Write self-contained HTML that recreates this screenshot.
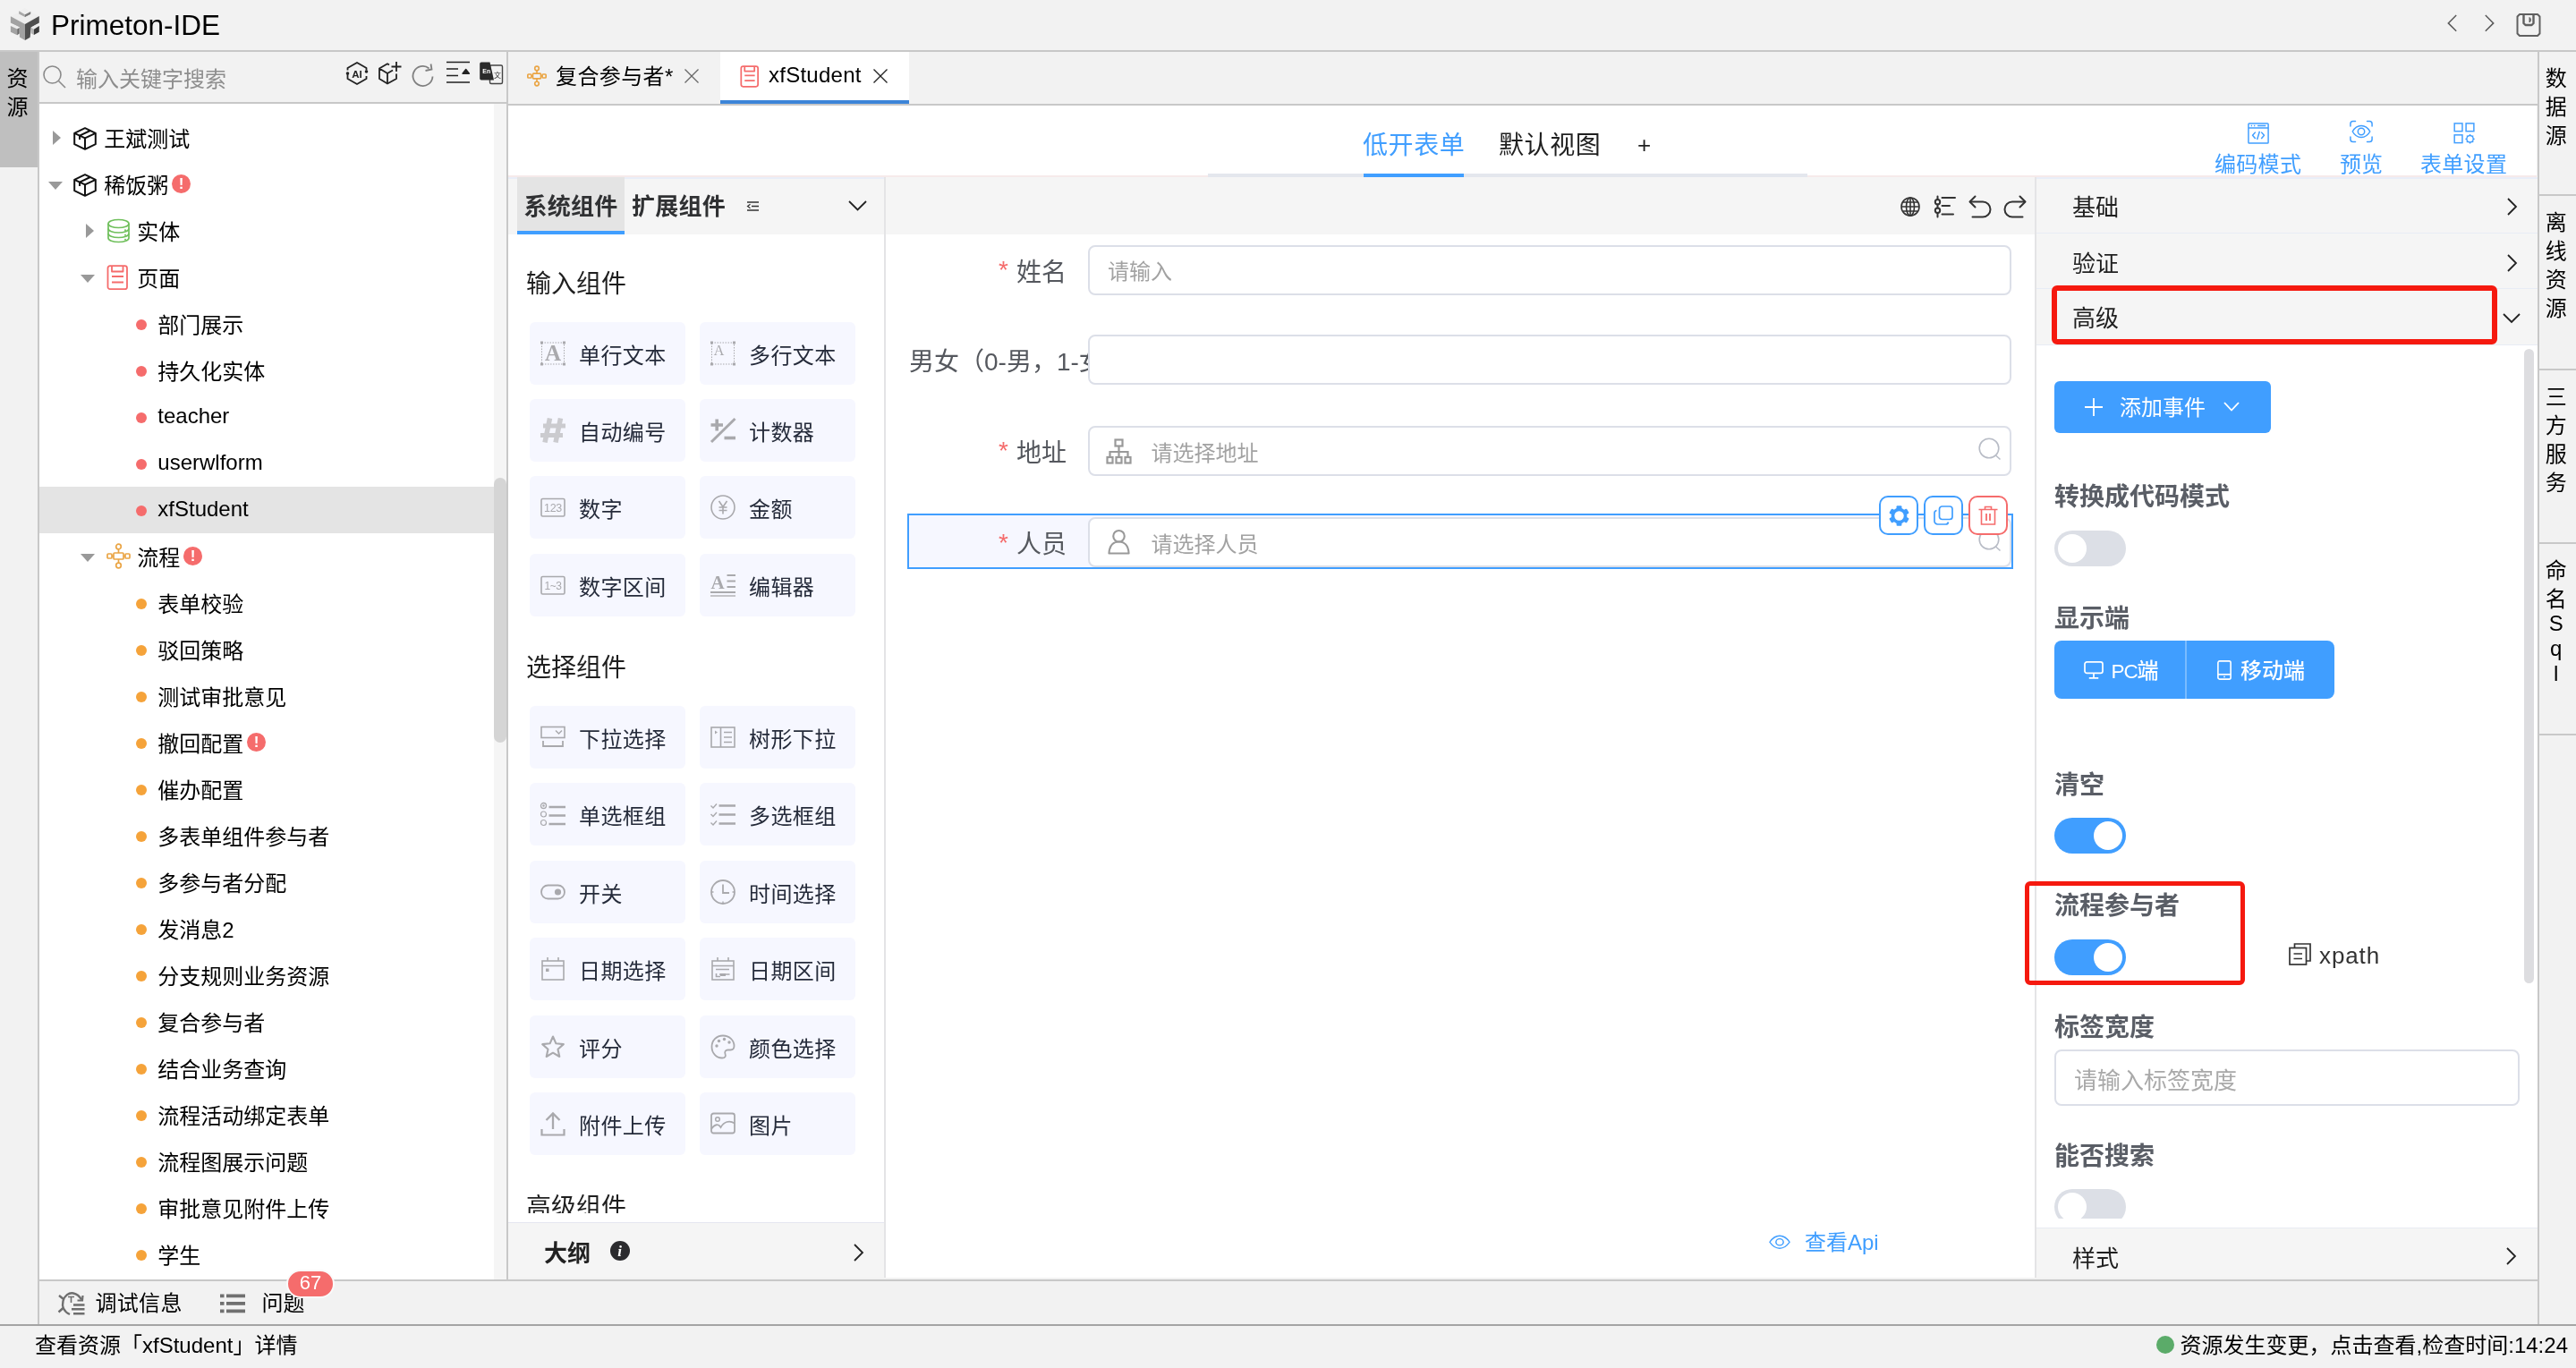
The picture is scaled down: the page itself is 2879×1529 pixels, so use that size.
<!DOCTYPE html>
<html lang="zh-CN">
<head>
<meta charset="utf-8">
<title>Primeton-IDE</title>
<style>
*{box-sizing:border-box;margin:0;padding:0}
html,body{width:2879px;height:1529px;overflow:hidden;background:#f2f2f2}
body{position:relative;font-family:"Liberation Sans","Noto Sans CJK SC",sans-serif;color:#000;font-size:24px;line-height:1}
.abs{position:absolute}
body>div{will-change:transform}
svg{display:block;overflow:visible}
/* title bar */
#titlebar{position:absolute;left:0;top:0;width:2879px;height:58px;background:#f2f2f2;border-bottom:2px solid #c8c8c8}
#title{position:absolute;left:57px;top:8px;font-size:31.5px;line-height:40px;color:#000;white-space:nowrap}
/* left side strip */
#lside{position:absolute;left:0;top:58px;width:44px;height:1423px;background:#f2f2f2;border-right:2px solid #c8c8c8}
#lside .tab{position:absolute;left:0;top:0;width:42px;height:129px;background:#bfbfbf;font-size:24px;line-height:32px;text-align:center;padding-top:13.500px;padding-right:3px}
/* search */
#search{position:absolute;left:44px;top:58px;width:522px;height:58px;background:#f2f2f2;border-bottom:2px solid #c8c8c8}
#search .ph{position:absolute;left:41px;top:10.500px;font-size:24px;line-height:40px;color:#8e8e8e;white-space:nowrap}
/* tree */
#tree{position:absolute;left:44px;top:116px;width:508px;height:1314px;background:#fff;overflow:hidden}
#treesb{position:absolute;left:552px;top:116px;width:14px;height:1314px;background:#f5f5f5}
#treesb i{position:absolute;left:0px;top:418px;width:13.500px;height:296px;border-radius:7px;background:#d5d5d5}
.row{position:absolute;left:0;width:508px;height:52px;white-space:nowrap}
.row.sel{background:#e4e4e4}
.row .t{position:absolute;top:1.5px;font-size:24px;line-height:52px;color:#000}
.row .t.lat{top:-1.3px}
.dot{position:absolute;top:21px;width:12px;height:12px;border-radius:50%}
.dot.r{background:#f56c6c}
.dot.o{background:#f5a33a}
.wn{display:inline-block;width:21px;height:21px;border-radius:50%;background:#f56c6c;color:#fff;font-size:17px;line-height:21px;text-align:center;font-weight:bold;margin-left:3.7px;vertical-align:4.5px}
.tri-r{position:absolute;width:0;height:0;border-left:9px solid #999;border-top:8px solid transparent;border-bottom:8px solid transparent}
.tri-d{position:absolute;width:0;height:0;border-top:9px solid #999;border-left:8px solid transparent;border-right:8px solid transparent}
#vline1{position:absolute;left:566px;top:58px;width:2px;height:1372px;background:#c8c8c8}
/* editor tabs */
#tabs{position:absolute;left:568px;top:58px;width:2268px;height:60px;background:#f2f2f2;border-bottom:2px solid #c8c8c8}
#tabs .tb{position:absolute;top:0;height:58px;font-size:24px;line-height:52px;white-space:nowrap}
#tabs .act{background:#fff;border-bottom:4px solid #3c85d8}
/* sub header */
#subhdr{position:absolute;left:568px;top:118px;width:2267px;height:80px;background:#fff;z-index:2;border-bottom:2px solid #f6eaea}
/* components */
#comp{position:absolute;left:568px;top:197px;width:420px;height:1231px;background:#fff;overflow:hidden}
/* comp panel */
.chdr{position:absolute;left:0;top:0;width:420px;height:65px;background:#f5f5f5;border-top:3px solid #e9eef8}
.ctab,.ctab2{position:absolute;top:-3px;height:65px;font-size:26px;font-weight:bold;line-height:69px;color:#303133;white-space:nowrap;letter-spacing:0.25px}
.ctab{left:10px;width:120px;background:#e4e4e4;border-bottom:4px solid #409eff;text-align:center}
.ctab2{left:138px}
.cbody{position:absolute;left:0;top:65px;width:420px;height:1094px;overflow:hidden}
.cbody>*{margin-top:-65px}
.ctitle{position:absolute;left:20px;font-size:28px;line-height:40px;color:#1f1f1f;white-space:nowrap}
.card{position:absolute;width:174px;height:70px;border-radius:6px;background:#f6f7ff;white-space:nowrap}
.card .ci{position:absolute;left:12px;top:21px}
.card span{position:absolute;left:55px;top:17.7px;font-size:24px;line-height:40px;color:#252b3a;letter-spacing:0.4px}
.outline{position:absolute;left:0;top:1169px;width:420px;height:62px;background:#f5f5f5;border-top:1px solid #e4e6f0}
.outline b{position:absolute;left:40px;top:14px;font-size:26px;line-height:40px;color:#222}
#vline2{position:absolute;left:988px;top:197px;width:2px;height:1231px;background:#e4e4e6}
#canvas{position:absolute;left:990px;top:197px;width:1285px;height:1231px;background:#fff;overflow:hidden}
/* canvas form */
.flabel{position:absolute;left:26px;width:200px;height:55px;font-size:28px;line-height:55px;color:#55585e;text-align:right;padding-right:24px;white-space:nowrap;overflow:hidden}
.flabel i{font-style:normal;color:#f56c6c;margin-right:9px;font-size:28px;font-family:"Liberation Sans",sans-serif;position:relative;top:-2.300px}
.finput{position:absolute;left:226px;width:1032px;height:55px;border:2px solid #dcdfe8;border-radius:8px;background:#fff}
.fph{position:absolute;top:6px;font-size:24px;line-height:40px;color:#a2a2a2;white-space:nowrap}
.abtn{position:absolute;width:44px;height:44px;border:2px solid #409eff;border-radius:10px;background:#fff}
#vline3{position:absolute;left:2274px;top:197px;width:2px;height:1231px;background:#e4e4e6}
#props{position:absolute;left:2276px;top:197px;width:560px;height:1231px;background:#fff;overflow:hidden}
/* props */
.prow{position:absolute;left:0;width:560px;background:#f5f5f5;border-bottom:1px solid #e8ecf5}
.prow span{position:absolute;left:40px;top:14px;font-size:26px;line-height:40px;color:#1f1f1f;white-space:nowrap}
.pbody{position:absolute;left:0;top:189px;width:560px;height:976px;overflow:hidden;background:#fff}
.pbtn{position:absolute;background:#409eff;border-radius:6px}
.plabel{position:absolute;left:20px;font-size:28px;font-weight:bold;line-height:40px;color:#5a5e66;white-space:nowrap}
.sw{position:absolute;left:20px;width:80px;height:40px;border-radius:20px}
.sw i{position:absolute;top:4px;width:32px;height:32px;border-radius:50%;background:#fff}
.sw.off{background:#dcdfe6}.sw.off i{left:4px}
.sw.on{background:#409eff}.sw.on i{left:44px}
/* right strip */
#rside{position:absolute;left:2836px;top:58px;width:43px;height:1423px;background:#f2f2f2;border-left:2px solid #c8c8c8}
#rside .tab{position:relative;width:41px;font-size:24px;line-height:32px;text-align:center;border-bottom:2px solid #c8c8c8;padding-top:14px;padding-right:3.600px}
/* bottom */
#bottombar{position:absolute;left:44px;top:1430px;width:2792px;height:51px;background:#f2f2f2;border-top:2px solid #c8c8c8}
#status{position:absolute;left:0;top:1480px;width:2879px;height:49px;background:#f2f2f2;border-top:2.500px solid #a4a4a4;font-size:24px}
</style>
</head>
<body>
<div id="titlebar">
  <svg class="abs" style="left:0;top:0" width="120" height="60" viewBox="0 0 2576 1288">
    <polygon points="455,262 600,195 735,280 600,350" fill="#efefef"/>
    <polygon points="455,262 600,350 600,412 455,340" fill="#a9a9a9"/>
    <polygon points="600,350 735,280 735,345 600,412" fill="#7a7a7a"/>
    <polygon points="255,390 440,305 455,340 600,412 735,345 760,300 940,385 600,582" fill="#eeeeee"/>
    <polygon points="255,390 600,582 600,968 470,893 470,655 255,545" fill="#a2a2a2"/>
    <polygon points="600,582 940,385 940,545 745,655 722,895 600,968" fill="#4f4f4f"/>
    <polygon points="255,622 330,588 465,655 412,700" fill="#ececec"/>
    <polygon points="255,622 412,700 412,845 255,770" fill="#a2a2a2"/>
    <polygon points="412,700 465,665 465,805 412,845" fill="#6a6a6a"/>
    <polygon points="745,660 870,590 940,622 815,702" fill="#ececec"/>
    <polygon points="745,660 815,702 815,838 745,800" fill="#b4b4b4"/>
    <polygon points="815,702 940,622 940,770 815,838" fill="#3a3a3a"/>
  </svg>
  <div id="title">Primeton-IDE</div>
  <svg class="abs" style="left:2734px;top:16px" width="14" height="20" viewBox="0 0 14 20" fill="none" stroke="#5a5a5a" stroke-width="1.500"><path d="M11.200 1 L2.300 9.900 L11.200 18.800"/></svg>
  <svg class="abs" style="left:2775px;top:16px" width="14" height="20" viewBox="0 0 14 20" fill="none" stroke="#5a5a5a" stroke-width="1.500"><path d="M2.800 1 L11.700 9.900 L2.800 18.800"/></svg>
  <svg class="abs" style="left:2812px;top:14px" width="28" height="28" viewBox="0 0 28 28" fill="none" stroke="#606060" stroke-width="2" stroke-linejoin="round"><path d="M4 2 H24 L26.500 4.500 V23.500 L24 26 H4 L1.500 23.500 V4.500 Z"/><path d="M8.500 2 V12 L10.500 14 H17.500 L19.500 12 V2" stroke-width="2.400"/><path d="M15 5.500 V11 C16.800 10 16.800 6.500 15 5.500 Z" stroke-width="1" fill="#606060"/></svg>
</div>
<div id="lside"><div class="tab">资<br>源</div></div>
<div id="search">
  <svg class="abs" style="left:3px;top:14px" width="28" height="28" viewBox="0 0 28 28" fill="none" stroke="#8a8a8a" stroke-width="1.600"><circle cx="11.500" cy="11.500" r="9.500"/><path d="M18.500 18.500 L26 26"/></svg>
  <div class="ph">输入关键字搜索</div>
  <svg class="abs" style="left:341px;top:10px" width="28" height="28" viewBox="0 0 28 28" fill="none" stroke="#222" stroke-width="1.800" stroke-linejoin="round"><path d="M3.500 10.500 V8 L14 2 L24.500 8 V10.500 M24.500 17 V20 L14 26 L3.500 20 V15"/><circle cx="3.500" cy="14" r="1.800" fill="#222" stroke="none"/><circle cx="24.500" cy="12" r="1.800" fill="#222" stroke="none"/><text x="14" y="18.500" font-family="Liberation Sans,sans-serif" font-size="11.500" font-weight="bold" fill="#222" stroke="none" text-anchor="middle">AI</text></svg>
  <svg class="abs" style="left:378px;top:10px" width="28" height="28" viewBox="0 0 28 28" fill="none" stroke="#222" stroke-width="1.800" stroke-linejoin="round"><path d="M13 4.500 L11 3.300 L2 8.500 V20 L11 25.500 L21 20 V14.500 M2 8.500 L11 14 L17 10.500 M11 14 V25.500"/><path d="M15.500 6.500 H26.500 M21 1 V12"/></svg>
  <svg class="abs" style="left:415px;top:13px" width="28" height="28" viewBox="0 0 28 28" fill="none" stroke="#808080" stroke-width="1.800"><path d="M24.500 14.500 A11 11 0 1 1 20.500 5.500"/><path d="M16.500 8 L23.500 6.500 L22.500 0.500"/></svg>
  <svg class="abs" style="left:454px;top:10px" width="28" height="28" viewBox="0 0 28 28" fill="none" stroke="#222" stroke-width="1.800"><path d="M1 1.500 H27 M1 9 H14 M1 16.500 H14 M1 24 H27" stroke-width="1.600"/><path d="M19 14.300 L22.700 9.500 L26.400 14.300 Z" fill="#222" stroke-linejoin="round" stroke-width="1.400"/></svg>
  <svg class="abs" style="left:491px;top:10px" width="28" height="28" viewBox="0 0 28 28"><rect x="12.500" y="5" width="14" height="20.500" rx="1.500" fill="#f2f2f2" stroke="#444" stroke-width="1.400"/><text x="21" y="18.500" font-family="Liberation Sans,Noto Sans CJK SC,sans-serif" font-size="8" fill="#333" text-anchor="middle">文</text><path d="M3 1.500 H12.500 L17 21.500 H3 A1.800 1.800 0 0 1 1.200 19.700 V3.300 A1.800 1.800 0 0 1 3 1.500 Z" fill="#2b2b2b"/><text x="8.700" y="14" font-family="Liberation Sans,sans-serif" font-size="7" font-weight="bold" fill="#fff" text-anchor="middle">En</text></svg>
</div>
<div id="tree">
<div class="row" style="top:12px"><i class="tri-r" style="left:15px;top:18px"></i><svg class="abs" style="left:38px;top:14px" width="26" height="26" viewBox="0 0 26 26" fill="none" stroke="#111" stroke-width="2" stroke-linejoin="round"><path d="M13 1.200 L24.800 6.800 V19.200 L13 24.800 L1.200 19.200 V6.800 Z"/><path d="M1.200 6.800 L13 12.400 L24.800 6.800 M13 12.400 V24.800 M18.800 4 L7 9.600 V14"/></svg><span class="t" style="left:72.3px">王斌测试</span></div>
<div class="row" style="top:64px"><i class="tri-d" style="left:10px;top:23px"></i><svg class="abs" style="left:38px;top:14px" width="26" height="26" viewBox="0 0 26 26" fill="none" stroke="#111" stroke-width="2" stroke-linejoin="round"><path d="M13 1.200 L24.800 6.800 V19.200 L13 24.800 L1.200 19.200 V6.800 Z"/><path d="M1.200 6.800 L13 12.400 L24.800 6.800 M13 12.400 V24.800 M18.800 4 L7 9.600 V14"/></svg><span class="t" style="left:72.3px">稀饭粥<b class="wn">!</b></span></div>
<div class="row" style="top:116px"><i class="tri-r" style="left:52px;top:18px"></i><svg class="abs" style="left:75px;top:12px" width="27" height="28" viewBox="0 0 27 28" fill="none" stroke="#6fbf5b" stroke-width="1.700"><ellipse cx="13.500" cy="6" rx="11.500" ry="4.500"/><path d="M2 6 V22 C2 24.500 7 26.500 13.500 26.500 S25 24.500 25 22 V6"/><path d="M2 11.500 C2 14 7 16 13.500 16 S25 14 25 11.500 M2 17 C2 19.500 7 21.500 13.500 21.500 S25 19.500 25 17"/><circle cx="21" cy="13.200" r="1" fill="#6fbf5b" stroke="none"/><circle cx="21" cy="18.700" r="1" fill="#6fbf5b" stroke="none"/><circle cx="21" cy="23.700" r="1" fill="#6fbf5b" stroke="none"/></svg><span class="t" style="left:109.3px">实体</span></div>
<div class="row" style="top:168px"><i class="tri-d" style="left:45.8px;top:23px"></i><svg class="abs" style="left:75px;top:11.500px" width="24" height="28" viewBox="0 0 24 28" fill="none" stroke="#f56c6c" stroke-width="1.800" stroke-linejoin="round"><rect x="1.500" y="1.200" width="21.500" height="26" rx="2.500"/><path d="M6 1.200 V7.500 H18.500 V1.200 M6 13 H19 M6 19.500 H19"/></svg><span class="t" style="left:109.3px">页面</span></div>
<div class="row" style="top:220px"><i class="dot r" style="left:108px"></i><span class="t" style="left:132.3px">部门展示</span></div>
<div class="row" style="top:272px"><i class="dot r" style="left:108px"></i><span class="t" style="left:132.3px">持久化实体</span></div>
<div class="row" style="top:324px"><i class="dot r" style="left:108px"></i><span class="t lat" style="left:132.3px">teacher</span></div>
<div class="row" style="top:376px"><i class="dot r" style="left:108px"></i><span class="t lat" style="left:132.3px">userwlform</span></div>
<div class="row sel" style="top:428px"><i class="dot r" style="left:108px"></i><span class="t lat" style="left:132.3px">xfStudent</span></div>
<div class="row" style="top:480px"><i class="tri-d" style="left:45.8px;top:23px"></i><svg class="abs" style="left:75px;top:11px" width="27" height="29" viewBox="0 0 27 29" fill="none" stroke="#eaa545" stroke-width="1.700"><circle cx="13.5" cy="4" r="2.8"/><circle cx="13.5" cy="25" r="2.8"/><rect x="8" y="11" width="11" height="7" rx="1"/><path d="M13.5 7 V11 M13.5 18 V22"/><rect x="1" y="12" width="5" height="5" rx="1"/><rect x="21" y="12" width="5" height="5" rx="1"/><path d="M6 14.5 H8 M19 14.5 H21"/></svg><span class="t" style="left:109.3px">流程<b class="wn">!</b></span></div>
<div class="row" style="top:532px"><i class="dot o" style="left:108px"></i><span class="t" style="left:132.3px">表单校验</span></div>
<div class="row" style="top:584px"><i class="dot o" style="left:108px"></i><span class="t" style="left:132.3px">驳回策略</span></div>
<div class="row" style="top:636px"><i class="dot o" style="left:108px"></i><span class="t" style="left:132.3px">测试审批意见</span></div>
<div class="row" style="top:688px"><i class="dot o" style="left:108px"></i><span class="t" style="left:132.3px">撤回配置<b class="wn">!</b></span></div>
<div class="row" style="top:740px"><i class="dot o" style="left:108px"></i><span class="t" style="left:132.3px">催办配置</span></div>
<div class="row" style="top:792px"><i class="dot o" style="left:108px"></i><span class="t" style="left:132.3px">多表单组件参与者</span></div>
<div class="row" style="top:844px"><i class="dot o" style="left:108px"></i><span class="t" style="left:132.3px">多参与者分配</span></div>
<div class="row" style="top:896px"><i class="dot o" style="left:108px"></i><span class="t" style="left:132.3px">发消息2</span></div>
<div class="row" style="top:948px"><i class="dot o" style="left:108px"></i><span class="t" style="left:132.3px">分支规则业务资源</span></div>
<div class="row" style="top:1000px"><i class="dot o" style="left:108px"></i><span class="t" style="left:132.3px">复合参与者</span></div>
<div class="row" style="top:1052px"><i class="dot o" style="left:108px"></i><span class="t" style="left:132.3px">结合业务查询</span></div>
<div class="row" style="top:1104px"><i class="dot o" style="left:108px"></i><span class="t" style="left:132.3px">流程活动绑定表单</span></div>
<div class="row" style="top:1156px"><i class="dot o" style="left:108px"></i><span class="t" style="left:132.3px">流程图展示问题</span></div>
<div class="row" style="top:1208px"><i class="dot o" style="left:108px"></i><span class="t" style="left:132.3px">审批意见附件上传</span></div>
<div class="row" style="top:1260px"><i class="dot o" style="left:108px"></i><span class="t" style="left:132.3px">学生</span></div>
<div class="row" style="top:1312px"><i class="dot o" style="left:108px"></i><span class="t" style="left:132.3px"></span></div>

</div>
<div id="treesb"><i></i></div>
<div id="vline1"></div>
<div id="tabs">
<div class="tb" style="left:0;width:237px">
  <svg class="abs" style="left:21px;top:15px" width="22" height="24" viewBox="0 0 27 29" fill="none" stroke="#eaa545" stroke-width="2"><circle cx="13.500" cy="4" r="2.800"/><circle cx="13.500" cy="25" r="2.800"/><rect x="8" y="11" width="11" height="7" rx="1"/><path d="M13.500 7 V11 M13.500 18 V22"/><rect x="1" y="12" width="5" height="5" rx="1"/><rect x="21" y="12" width="5" height="5" rx="1"/><path d="M6 14.500 H8 M19 14.500 H21"/></svg>
  <span class="abs" style="left:53px;top:2px;letter-spacing:0.400px">复合参与者*</span>
  <svg class="abs" style="left:197px;top:19px" width="16" height="16" viewBox="0 0 16 16" fill="none" stroke="#666" stroke-width="1.300"><path d="M0.500 0.500 L15.500 15.500 M15.500 0.500 L0.500 15.500"/></svg>
</div>
<div class="tb act" style="left:237px;width:211px">
  <svg class="abs" style="left:21.500px;top:14.500px" width="21" height="24.500" viewBox="0 0 24 28" fill="none" stroke="#f56c6c" stroke-width="2" stroke-linejoin="round"><rect x="1.500" y="1.200" width="21.500" height="26" rx="2.500"/><path d="M6 1.200 V7.500 H18.500 V1.200 M6 13 H19 M6 19.500 H19"/></svg>
  <span class="abs" style="left:54px;top:0px;letter-spacing:0.250px">xfStudent</span>
  <svg class="abs" style="top:19px;left:171px" width="16" height="16" viewBox="0 0 16 16" fill="none" stroke="#222" stroke-width="1.400"><path d="M0.500 0.500 L15.500 15.500 M15.500 0.500 L0.500 15.500"/></svg>
</div>

</div>
<div id="subhdr">
<div class="abs" style="left:782px;top:76px;width:670px;height:4px;background:#e4e7ed"></div>
<div class="abs" style="left:956px;top:76px;width:112px;height:4px;background:#409eff"></div>
<div class="abs" style="left:955px;top:24.500px;font-size:28px;line-height:40px;color:#409eff;white-space:nowrap;letter-spacing:0.600px">低开表单</div>
<div class="abs" style="left:1107px;top:24.500px;font-size:28px;line-height:40px;color:#1f1f1f;white-space:nowrap;letter-spacing:0.600px">默认视图</div>
<div class="abs" style="left:1262px;top:24px;font-size:26px;line-height:40px;color:#1f1f1f">+</div>
<!-- right actions -->
<svg class="abs" style="left:1944px;top:18.500px" width="24" height="24" viewBox="0 0 26 26" fill="none" stroke="#409eff" stroke-width="1.600" stroke-linejoin="round"><rect x="1" y="1" width="24" height="24" rx="1"/><path d="M1 6.500 H25 M4 3.800 H5.500 M7.500 3.800 H9 M12 3.800 H22"/><path d="M9.500 11.500 L6 15.500 L9.500 19.500 M16.500 11.500 L20 15.500 L16.500 19.500 M14.500 10.500 L11.500 20.500"/></svg>
<div class="abs" style="left:1907px;top:50px;font-size:24px;line-height:32px;color:#409eff;white-space:nowrap;letter-spacing:0.300px">编码模式</div>
<svg class="abs" style="left:2058px;top:16px" width="26" height="26" viewBox="0 0 28 27" fill="none" stroke="#409eff" stroke-width="1.600" stroke-linecap="round"><path d="M1 7 V4 A3 3 0 0 1 4 1 H7 M21 1 H24 A3 3 0 0 1 27 4 V7 M27 20 V23 A3 3 0 0 1 24 26 H21 M7 26 H4 A3 3 0 0 1 1 23 V20"/><path d="M3.500 13.500 C6.500 8 10.500 6.500 14 6.500 S21.500 8 24.500 13.500 C21.500 19 17.500 20.500 14 20.500 S6.500 19 3.500 13.500 Z"/><circle cx="14" cy="13.500" r="4"/></svg>
<div class="abs" style="left:2047px;top:50px;font-size:24px;line-height:32px;color:#409eff;white-space:nowrap">预览</div>
<svg class="abs" style="left:2174px;top:18.500px" width="24.500" height="24" viewBox="0 0 26 26" fill="none" stroke="#409eff" stroke-width="1.600"><rect x="1" y="1" width="9.500" height="9.500"/><rect x="15" y="1" width="9.500" height="9.500"/><rect x="1" y="15" width="9.500" height="9.500"/><circle cx="19.800" cy="19.800" r="4"/><path d="M19.800 14.200 V15.800 M19.800 23.800 V25.400 M14.200 19.800 H15.800 M23.800 19.800 H25.400 M15.800 15.800 L17 17 M22.600 22.600 L23.800 23.800 M15.800 23.800 L17 22.600 M22.600 17 L23.800 15.800" stroke-width="1.400"/></svg>
<div class="abs" style="left:2137px;top:50px;font-size:24px;line-height:32px;color:#409eff;white-space:nowrap;letter-spacing:0.300px">表单设置</div>

</div>
<div id="comp">
<div class="chdr"><div class="ctab on">系统组件</div><div class="ctab2">扩展组件</div><svg class="abs" style="left:266.500px;top:25px" width="13" height="11" viewBox="0 0 13 11" fill="none" stroke="#333" stroke-width="1.600"><path d="M0 1 H13 M5 5.500 H13 M0 10 H13"/><path d="M3.500 3.200 L0.500 5.500 L3.500 7.800" stroke-width="1.200"/></svg><svg class="abs" style="left:380px;top:24.200px" width="21" height="12" viewBox="0 0 21 12" fill="none" stroke="#222" stroke-width="1.800"><path d="M1 1 L10.500 10.500 L20 1"/></svg></div>
<div class="cbody">
<div class="ctitle" style="top:101.3px">输入组件</div>
<div class="card" style="left:24px;top:163px"><svg class="ci" width="28" height="28" viewBox="0 0 28 28" fill="none" stroke="#a9a9ad" stroke-width="1.8" ><rect x="1.5" y="2" width="25" height="24" stroke-width="1" stroke-dasharray="1.5 1.5"/><rect x="0" y="0.5" width="3" height="3" fill="#a9a9ad" stroke="none"/><rect x="0" y="24.5" width="3" height="3" fill="#a9a9ad" stroke="none"/><rect x="25" y="0.5" width="3" height="3" fill="#a9a9ad" stroke="none"/><rect x="25" y="24.5" width="3" height="3" fill="#a9a9ad" stroke="none"/><text x="14" y="22" font-family="Liberation Serif,serif" font-weight="bold" font-size="25" fill="#a9a9ad" stroke="none" text-anchor="middle">A</text></svg><span>单行文本</span></div>
<div class="card" style="left:214px;top:163px"><svg class="ci" width="28" height="28" viewBox="0 0 28 28" fill="none" stroke="#a9a9ad" stroke-width="1.8" ><rect x="1.5" y="2" width="25" height="24" stroke-width="1" stroke-dasharray="1.5 1.5"/><rect x="0" y="0.5" width="3" height="3" fill="#a9a9ad" stroke="none"/><rect x="0" y="24.5" width="3" height="3" fill="#a9a9ad" stroke="none"/><rect x="25" y="0.5" width="3" height="3" fill="#a9a9ad" stroke="none"/><rect x="25" y="24.5" width="3" height="3" fill="#a9a9ad" stroke="none"/><text x="9.500" y="16" font-family="Liberation Serif,serif" font-size="16" fill="#a9a9ad" stroke="none" text-anchor="middle">A</text></svg><span>多行文本</span></div>
<div class="card" style="left:24px;top:249px"><svg class="ci" width="28" height="28" viewBox="0 0 28 28" fill="none" stroke="#a9a9ad" stroke-width="1.8" ><path d="M10.500 0.500 L5 27.500 M22.500 0.500 L17 27.500" stroke="#cbcbcf" stroke-width="5.500"/><path d="M3 9 H28 M0 19.500 H25" stroke="#cbcbcf" stroke-width="5"/></svg><span>自动编号</span></div>
<div class="card" style="left:214px;top:249px"><svg class="ci" width="28" height="28" viewBox="0 0 28 28" fill="none" stroke="#a9a9ad" stroke-width="1.8" ><path d="M0.500 8 H14 M7.200 1.500 V14.500" stroke-width="3.600"/><path d="M15.500 22.500 H28" stroke-width="3.600"/><path d="M27.500 1 L1 27" stroke-width="3"/></svg><span>计数器</span></div>
<div class="card" style="left:24px;top:335px"><svg class="ci" width="28" height="28" viewBox="0 0 28 28" fill="none" stroke="#a9a9ad" stroke-width="1.8" ><rect x="1" y="4.500" width="26" height="19.500" rx="1.500" stroke-width="1.600"/><text x="14" y="19" font-family="Liberation Sans,sans-serif" font-size="12.500" fill="#a9a9ad" stroke="none" text-anchor="middle" letter-spacing="-0.300">123</text></svg><span>数字</span></div>
<div class="card" style="left:214px;top:335px"><svg class="ci" width="28" height="28" viewBox="0 0 28 28" fill="none" stroke="#a9a9ad" stroke-width="1.8" ><circle cx="14" cy="14" r="13" stroke-width="1.600"/><path d="M9.500 7 L14 13.500 L18.500 7 M14 13.500 V21.500 M9.500 14 H18.500 M9.500 17.500 H18.500" stroke-width="1.600"/></svg><span>金额</span></div>
<div class="card" style="left:24px;top:422px"><svg class="ci" width="28" height="28" viewBox="0 0 28 28" fill="none" stroke="#a9a9ad" stroke-width="1.8" ><rect x="1" y="4.500" width="26" height="19.500" rx="1.500" stroke-width="1.600"/><text x="14" y="18.500" font-family="Liberation Sans,sans-serif" font-size="12" fill="#a9a9ad" stroke="none" text-anchor="middle" letter-spacing="-0.500">1~3</text></svg><span>数字区间</span></div>
<div class="card" style="left:214px;top:422px"><svg class="ci" width="28" height="28" viewBox="0 0 28 28" fill="none" stroke="#a9a9ad" stroke-width="1.8" ><text x="8" y="17.500" font-family="Liberation Serif,serif" font-weight="bold" font-size="21" fill="#a9a9ad" stroke="none" text-anchor="middle">A</text><path d="M18.500 3 H28 M18.500 9.500 H28 M18.500 16 H28" stroke-width="2"/><path d="M0 22 H28" stroke-width="2"/><path d="M0 26 H28" stroke-width="2" stroke="#c4c4c8"/></svg><span>编辑器</span></div>
<div class="ctitle" style="top:529.8px">选择组件</div>
<div class="card" style="left:24px;top:592px"><svg class="ci" width="28" height="28" viewBox="0 0 28 28" fill="none" stroke="#a9a9ad" stroke-width="1.8" ><rect x="1" y="2.500" width="26" height="12"  stroke-width="1.600"/><path d="M17 6.500 L20.500 10 L24 6.500" stroke-width="1.500"/><path d="M3 18 V24 H25 V18" stroke-width="1.800"/></svg><span>下拉选择</span></div>
<div class="card" style="left:214px;top:592px"><svg class="ci" width="28" height="28" viewBox="0 0 28 28" fill="none" stroke="#a9a9ad" stroke-width="1.8" ><rect x="1" y="3" width="26" height="22" stroke-width="1.600"/><path d="M11.500 3 V25" stroke-width="1.600"/><path d="M5 6.500 L8 8.500 L5 10.500 Z" fill="#a9a9ad" stroke="none"/><path d="M15 8.500 H24 M15 14 H24 M15 19.500 H24" stroke-width="1.600"/></svg><span>树形下拉</span></div>
<div class="card" style="left:24px;top:678px"><svg class="ci" width="28" height="28" viewBox="0 0 28 28" fill="none" stroke="#a9a9ad" stroke-width="1.8" ><circle cx="3.500" cy="4.500" r="3" stroke-width="1.300"/><circle cx="3.500" cy="4.500" r="1.200" fill="#a9a9ad" stroke="none"/><circle cx="3.500" cy="14" r="3" stroke-width="1.200"/><circle cx="3.500" cy="23.500" r="3" stroke-width="1.200"/><path d="M9.500 6 H28 M9.500 15.500 H28 M9.500 25 H28" stroke-width="2.300"/></svg><span>单选框组</span></div>
<div class="card" style="left:214px;top:678px"><svg class="ci" width="28" height="28" viewBox="0 0 28 28" fill="none" stroke="#a9a9ad" stroke-width="1.8" ><path d="M0.500 4.500 L3 7 L7 2.500 M0.500 14 L3 16.500 L7 12 M0.500 23.500 L3 26 L7 21.500" stroke-width="1.400"/><path d="M9.500 4.500 H28 M9.500 14.500 H28 M9.500 24.500 H28" stroke-width="2.300"/></svg><span>多选框组</span></div>
<div class="card" style="left:24px;top:765px"><svg class="ci" width="28" height="28" viewBox="0 0 28 28" fill="none" stroke="#a9a9ad" stroke-width="1.8" ><rect x="1" y="6.500" width="26" height="15" rx="7.500" stroke-width="1.800"/><circle cx="19.500" cy="14" r="3.600" fill="#a9a9ad" stroke="none"/></svg><span>开关</span></div>
<div class="card" style="left:214px;top:765px"><svg class="ci" width="28" height="28" viewBox="0 0 28 28" fill="none" stroke="#a9a9ad" stroke-width="1.8" ><circle cx="14" cy="14" r="13" stroke-width="1.800"/><path d="M14 5.500 V15 H21" stroke-width="1.800"/><path d="M14 24.500 V27 M1 14 H3.500 M24.500 14 H27" stroke-width="1.400"/></svg><span>时间选择</span></div>
<div class="card" style="left:24px;top:851px"><svg class="ci" width="28" height="28" viewBox="0 0 28 28" fill="none" stroke="#a9a9ad" stroke-width="1.8" ><rect x="2" y="5" width="24" height="21" stroke-width="1.600"/><path d="M2 10.500 H26 M8 1 V5 M20 1 V5" stroke-width="1.600"/><rect x="6" y="13.500" width="3.500" height="3.500" fill="#a9a9ad" stroke="none"/></svg><span>日期选择</span></div>
<div class="card" style="left:214px;top:851px"><svg class="ci" width="28" height="28" viewBox="0 0 28 28" fill="none" stroke="#a9a9ad" stroke-width="1.8" ><rect x="2" y="5" width="24" height="21" stroke-width="1.600"/><path d="M2 10.500 H26 M8 1 V5 M20 1 V5" stroke-width="1.600"/><path d="M6 14.500 H21 M10 20 H21.500 M6.500 19 V22.500 H11" stroke-width="1.600"/><rect x="11" y="19" width="6" height="3" fill="#a9a9ad" stroke="none"/></svg><span>日期区间</span></div>
<div class="card" style="left:24px;top:938px"><svg class="ci" width="28" height="28" viewBox="0 0 28 28" fill="none" stroke="#a9a9ad" stroke-width="1.8" ><path d="M14 2.500 L17.400 10.300 L25.800 11.100 L19.500 16.700 L21.300 25 L14 20.700 L6.700 25 L8.500 16.700 L2.200 11.100 L10.600 10.300 Z" stroke-width="2.100" stroke-linejoin="round"/></svg><span>评分</span></div>
<div class="card" style="left:214px;top:938px"><svg class="ci" width="28" height="28" viewBox="0 0 28 28" fill="none" stroke="#a9a9ad" stroke-width="1.8" ><path d="M14 1.500 C6.500 1.500 1.500 7 1.500 14 C1.500 21 6.500 26.500 13 26.500 C16.500 26.500 17.500 24.500 16.500 22 C15.500 19.500 17 17.500 19.500 17.500 H22.500 C25 17.500 26.500 15.500 26.500 13 C26.500 6.500 21 1.500 14 1.500 Z" stroke-width="1.800"/><circle cx="7" cy="13" r="1.700" fill="#a9a9ad" stroke="none"/><circle cx="9.500" cy="7.500" r="1.700" fill="#a9a9ad" stroke="none"/><circle cx="15.500" cy="5.500" r="1.700" fill="#a9a9ad" stroke="none"/><circle cx="21" cy="9" r="1.700" fill="#a9a9ad" stroke="none"/></svg><span>颜色选择</span></div>
<div class="card" style="left:24px;top:1024px"><svg class="ci" width="28" height="28" viewBox="0 0 28 28" fill="none" stroke="#a9a9ad" stroke-width="1.8" ><path d="M14 20 V2.500 M6.500 10 L14 2.500 L21.500 10" stroke-width="2.300"/><path d="M1.500 20 V26.500 H26.500 V20" stroke-width="2.200"/></svg><span>附件上传</span></div>
<div class="card" style="left:214px;top:1024px"><svg class="ci" width="28" height="28" viewBox="0 0 28 28" fill="none" stroke="#a9a9ad" stroke-width="1.8" ><rect x="1" y="2.500" width="26" height="22" rx="2.500" stroke-width="1.800"/><circle cx="8" cy="9" r="2.300" stroke-width="1.500"/><path d="M1 20 C5 14 9 14 11.500 18 C15 12 21 9.500 27 13.500" stroke-width="1.800"/></svg><span>图片</span></div>
<div class="ctitle" style="top:1133px">高级组件</div>
</div>
<div class="outline"><b>大纲</b><svg class="abs" style="left:114px;top:20.400px" width="22" height="22" viewBox="0 0 22 22"><circle cx="11" cy="11" r="11" fill="#2b2b2e"/><text x="10.500" y="17" font-family="Liberation Serif,serif" font-style="italic" font-weight="bold" font-size="17" fill="#fff" text-anchor="middle">i</text></svg><svg class="abs" style="left:386px;top:23px" width="11" height="20" viewBox="0 0 11 20" fill="none" stroke="#222" stroke-width="1.800"><path d="M1 1 L10 10 L1 19"/></svg></div>

</div>
<div id="vline2"></div>
<div id="canvas">
<div class="abs" style="left:0;top:1px;width:1285px;height:64px;background:#f5f5f5"></div>
<!-- toolbar icons -->
<svg class="abs" style="left:1134px;top:23px" width="22" height="22" viewBox="0 0 22 22" fill="none" stroke="#333" stroke-width="1.600"><circle cx="11" cy="11" r="10"/><ellipse cx="11" cy="11" rx="4.500" ry="10"/><path d="M11 1 V21 M1 11 H21 M2.500 6 H19.500 M2.500 16 H19.500"/></svg>
<svg class="abs" style="left:1171px;top:21px" width="26" height="26" viewBox="0 0 26 26" fill="none" stroke="#333" stroke-width="2" stroke-linecap="round"><path d="M4.500 1.500 V5 M4.500 10.500 V14.500 M4.500 20 V24.500"/><circle cx="4.500" cy="7.800" r="2.700"/><circle cx="4.500" cy="17.300" r="2.700"/><path d="M9.500 3 H24 M9.500 12 H18 M9.500 21.500 H22"/></svg>
<svg class="abs" style="left:1210px;top:21px" width="26" height="26" viewBox="0 0 26 26" fill="none" stroke="#333" stroke-width="2" stroke-linecap="round" stroke-linejoin="round"><path d="M7.500 1.500 L1.500 7.500 L7.500 13.500"/><path d="M2 7.500 H16 A8.500 8.500 0 0 1 16 24.500 H4.500"/></svg>
<svg class="abs" style="left:1249px;top:21px" width="26" height="26" viewBox="0 0 26 26" fill="none" stroke="#333" stroke-width="2" stroke-linecap="round" stroke-linejoin="round"><path d="M18.500 1.500 L24.500 7.500 L18.500 13.500"/><path d="M24 7.500 H10 A8.500 8.500 0 0 0 10 24.500 H21.500"/></svg>
<!-- form rows -->
<div class="flabel" style="top:79.700px"><i>*</i>姓名</div>
<div class="finput" style="top:77px;height:55.500px"><span class="fph" style="left:20px;top:8px">请输入</span></div>
<div class="flabel nowrapclip" style="top:180px;left:26px;width:200.400px;text-align:left;padding:0">男女（0-男，1-女）</div>
<div class="finput" style="top:177px;height:55.500px"></div>
<div class="flabel" style="top:281.600px"><i>*</i>地址</div>
<div class="finput" style="top:279px;height:56px">
  <svg class="abs" style="left:18px;top:12px" width="29" height="29" viewBox="0 0 29 29" fill="none" stroke="#999" stroke-width="2.200"><rect x="10.500" y="1.500" width="8" height="7"/><rect x="1.500" y="21" width="6" height="6.500"/><rect x="11.500" y="21" width="6" height="6.500"/><rect x="21.500" y="21" width="6" height="6.500"/><path d="M14.500 8.500 V21 M4.500 21 V15 H24.500 V21"/></svg>
  <span class="fph" style="left:68.500px;top:8.500px">请选择地址</span>
  <svg class="abs" style="left:993px;top:11px" width="26" height="26" viewBox="0 0 26 26" fill="none" stroke="#b8bcc6" stroke-width="1.600"><circle cx="12" cy="12" r="10.800"/><path d="M19.500 20 L24.500 24.500"/></svg>
</div>
<div class="abs" style="left:24px;top:377px;width:1236px;height:62px;border:2px solid #409eff;background:#f6f7ff"></div>
<div class="flabel" style="top:383.800px"><i>*</i>人员</div>
<div class="finput" style="top:380.500px;height:56px">
  <svg class="abs" style="left:19.500px;top:11.500px" width="25" height="29" viewBox="0 0 26 30" fill="none" stroke="#999" stroke-width="2.200" stroke-linejoin="round"><circle cx="13" cy="8.500" r="6.500"/><path d="M1.500 28.500 C2 19 7 15 13 15 S24 19 24.500 28.500 Z"/></svg>
  <span class="fph" style="left:68.500px;top:9px">请选择人员</span>
  <svg class="abs" style="left:993px;top:11px" width="26" height="26" viewBox="0 0 26 26" fill="none" stroke="#b8bcc6" stroke-width="1.600"><circle cx="12" cy="12" r="10.800"/><path d="M19.500 20 L24.500 24.500"/></svg>
</div>
<!-- action buttons -->
<div class="abtn" style="left:1110px;top:357px;border-color:#409eff">
  <svg class="abs" style="left:8.500px;top:8.500px" width="23" height="23" viewBox="0 0 22 22"><g fill="#409eff"><circle cx="11" cy="11" r="8.500"/><g id="teeth"><rect x="8.200" y="0.200" width="5.600" height="21.600" rx="1"/><rect x="8.200" y="0.200" width="5.600" height="21.600" rx="1" transform="rotate(60 11 11)"/><rect x="8.200" y="0.200" width="5.600" height="21.600" rx="1" transform="rotate(120 11 11)"/></g></g><circle cx="11" cy="11" r="5" fill="#fff"/></svg>
</div>
<div class="abtn" style="left:1160px;top:357px;border-color:#409eff">
  <svg class="abs" style="left:9px;top:9px" width="22" height="22" viewBox="0 0 22 22" fill="none" stroke="#409eff" stroke-width="1.700"><rect x="6.500" y="1" width="14.500" height="14.500" rx="3"/><path d="M3.500 5.500 A3 3 0 0 0 1 8.500 V17.500 A3.500 3.500 0 0 0 4.500 21 H13.500 A3 3 0 0 0 16.500 18.500"/></svg>
</div>
<div class="abtn" style="left:1210px;top:357px;border-color:#f56c6c">
  <svg class="abs" style="left:9px;top:9px" width="22" height="22" viewBox="0 0 22 22" fill="none" stroke="#f56c6c" stroke-width="1.600"><path d="M0.500 4.500 H21.500 M7.500 4.500 V1.500 H14.500 V4.500 M3.500 4.500 V21 H18.500 V4.500"/><path d="M9 9 V17 M13 9 V17" stroke-width="1.800"/></svg>
</div>
<!-- view api -->
<svg class="abs" style="left:987px;top:1183px" width="24" height="16.500" viewBox="0 0 26 20" preserveAspectRatio="none" fill="none" stroke="#409eff" stroke-width="1.600"><path d="M1 10 C5 3.500 9 1.500 13 1.500 S21 3.500 25 10 C21 16.500 17 18.500 13 18.500 S5 16.500 1 10 Z"/><circle cx="13" cy="10" r="4.500"/></svg>
<div class="abs" style="left:1027px;top:1172px;font-size:24px;line-height:40px;color:#409eff;white-space:nowrap">查看Api</div>

</div>
<div id="vline3"></div>
<div id="props">
<div class="prow" style="top:0;height:64px"><span style="top:15.300px">基础</span><svg class="abs" style="left:525.500px;top:24px" width="11" height="20" viewBox="0 0 11 20" fill="none" stroke="#222" stroke-width="1.800"><path d="M1 1 L10 10 L1 19"/></svg></div>
<div class="prow" style="top:64px;height:62px"><span>验证</span><svg class="abs" style="left:525.500px;top:23px" width="11" height="20" viewBox="0 0 11 20" fill="none" stroke="#222" stroke-width="1.800"><path d="M1 1 L10 10 L1 19"/></svg></div>
<div class="prow" style="top:126px;height:63px"><span style="top:13.200px">高级</span><svg class="abs" style="left:520.500px;top:27px" width="20" height="11" viewBox="0 0 20 11" fill="none" stroke="#222" stroke-width="1.800"><path d="M1 1 L10 10 L19 1"/></svg></div>
<div class="abs" style="left:0;top:1px;width:560px;height:2px;background:#e9eef8"></div>
<div class="pbody">
  <div class="pbtn" style="left:20px;top:40px;width:242px;height:58px">
    <svg class="abs" style="left:34px;top:19px" width="20" height="20" viewBox="0 0 20 20" fill="none" stroke="#fff" stroke-width="1.800"><path d="M10 0 V20 M0 10 H20"/></svg>
    <span class="abs" style="left:73px;top:10px;font-size:24px;line-height:40px;color:#fff;white-space:nowrap">添加事件</span>
    <svg class="abs" style="left:189px;top:23px" width="18" height="11" viewBox="0 0 18 11" fill="none" stroke="#fff" stroke-width="1.800"><path d="M1 1 L9 9.500 L17 1"/></svg>
  </div>
  <div class="plabel" style="top:150.300px">转换成代码模式</div>
  <div class="sw off" style="top:207px"><i></i></div>
  <div class="plabel" style="top:286.200px">显示端</div>
  <div class="pbtn" style="left:20px;top:329.500px;width:313px;height:65px;border-radius:8px">
    <div class="abs" style="left:146px;top:0;width:2px;height:65px;background:#79bbff"></div>
    <svg class="abs" style="left:33px;top:23.500px" width="22" height="20" viewBox="0 0 23 21" fill="none" stroke="#fff" stroke-width="1.800"><rect x="1" y="1" width="21" height="13" rx="2.500"/><path d="M11.500 14 V19.500 M6 19.800 H17"/></svg>
    <span class="abs" style="left:63.500px;top:14.500px;font-size:24px;line-height:40px;color:#fff;white-space:nowrap;font-weight:500"><span style="font-size:22.500px;letter-spacing:-0.900px;margin-right:-0.500px">PC</span>端</span>
    <svg class="abs" style="left:182px;top:22px" width="16" height="22" viewBox="0 0 18 23" preserveAspectRatio="none" fill="none" stroke="#fff" stroke-width="1.800"><rect x="1" y="1" width="16" height="21" rx="2"/><path d="M1 16.500 H17"/><circle cx="9" cy="19.300" r="0.900" fill="#fff" stroke="none"/></svg>
    <span class="abs" style="left:208px;top:14.500px;font-size:24px;line-height:40px;color:#fff;white-space:nowrap;font-weight:500">移动端</span>
  </div>
  <div class="plabel" style="top:471.700px">清空</div>
  <div class="sw on" style="top:527.500px"><i></i></div>
  <div class="plabel" style="top:607px">流程参与者</div>
  <div class="sw on" style="top:664px"><i></i></div>
  <svg class="abs" style="left:282px;top:668px" width="25" height="25" viewBox="0 0 25 25" fill="none" stroke="#333" stroke-width="1.700"><path d="M6.500 5 V1 H24 V20 H20"/><rect x="1" y="5.500" width="18.500" height="18.500"/><path d="M5.500 12 H15 M5.500 17.500 H15"/></svg>
  <div class="abs" style="left:316px;top:661.700px;font-size:26px;line-height:40px;color:#333;white-space:nowrap;letter-spacing:0.900px">xpath</div>
  <div class="plabel" style="top:743px">标签宽度</div>
  <div class="abs" style="left:20px;top:787px;width:520px;height:63px;border:2px solid #dcdfe8;border-radius:8px;background:#fff"><span class="abs" style="left:20px;top:12.500px;font-size:26px;line-height:40px;color:#a9a9a9;white-space:nowrap">请输入标签宽度</span></div>
  <div class="plabel" style="top:887.200px">能否搜索</div>
  <div class="sw off" style="top:943.300px"><i></i></div>
  <div class="abs" style="left:545px;top:4px;width:11px;height:709px;border-radius:6px;background:#dddde0"></div>
</div>
<div class="prow" style="top:1174.500px;height:56.500px;border-top:1px solid #e8ebf3;border-bottom:none"><span style="top:14.500px">样式</span><svg class="abs" style="left:525.200px;top:21.800px" width="11" height="20" viewBox="0 0 11 20" fill="none" stroke="#222" stroke-width="1.800"><path d="M1 1 L10 10 L1 19"/></svg></div>

</div>
<div class="abs" style="left:2293px;top:319px;width:498px;height:66px;border:6px solid #f5190f;border-radius:6px"></div>
<div class="abs" style="left:2263px;top:985px;width:246px;height:115.500px;border:5.500px solid #f5190f;border-radius:6px"></div>
<div id="rside">
<div class="tab" style="height:161px">数<br>据<br>源</div>
<div class="tab" style="height:195px">离<br>线<br>资<br>源</div>
<div class="tab" style="height:194px">三<br>方<br>服<br>务</div>
<div class="tab" style="height:214px">命<br>名<span style="display:block;line-height:22.400px">S</span><span style="display:block;line-height:33.400px">q</span><span style="display:block;line-height:22.600px">l</span></div>

</div>
<div id="bottombar">
<svg class="abs" style="left:21px;top:11.300px" width="30" height="28" viewBox="0 0 30 28" fill="none" stroke="#6e6e6e" stroke-width="2.400" stroke-linecap="butt"><path d="M13 26 C6 23 4 17 5.500 11 C7 5 12 1.500 17 2.500 C21 3.300 24 6 26 9.500"/><path d="M21.500 10.500 L27 10.500 L27.500 5" stroke-width="2.200"/><path d="M6 9 L1 5 M5.500 19 L0.500 23.500" stroke-width="2.400"/><path d="M11 6.500 H18 M14.500 6.500 V13" stroke-width="1.600"/><path d="M17 15.500 H29.500 M15 20.300 H29.500 M17 25.200 H29.500" stroke-width="2.600"/></svg>
<div class="abs" style="left:62.500px;top:4.700px;font-size:24px;line-height:40px;white-space:nowrap;letter-spacing:0.300px">调试信息</div>
<svg class="abs" style="left:202px;top:13.500px" width="28" height="22" viewBox="0 0 28 22" fill="#707070"><rect x="0" y="0.500" width="4.500" height="3.800"/><rect x="7" y="0.500" width="21" height="3.800"/><rect x="0" y="9" width="4.500" height="3.800"/><rect x="7" y="9" width="21" height="3.800"/><rect x="0" y="17.500" width="4.500" height="3.800"/><rect x="7" y="17.500" width="21" height="3.800"/></svg>
<div class="abs" style="left:248.500px;top:4.700px;font-size:24px;line-height:40px;white-space:nowrap">问题</div>
<div class="abs" style="left:276px;top:-13px;width:54px;height:32px;border-radius:16px;background:#f56c6c;border:2px solid #fafafa;color:#fff;font-size:22px;line-height:25px;text-align:center">67</div>

</div>
<div id="status">
<div class="abs" style="left:39px;top:2px;line-height:40px;white-space:nowrap">查看资源「xfStudent」详情</div>
<div class="abs" style="left:2410px;top:10.500px;width:20px;height:20px;border-radius:50%;background:#5bab69"></div>
<div class="abs" style="right:9px;top:2px;line-height:40px;white-space:nowrap">资源发生变更，点击查看,检查时间:14:24</div>

</div>
</body>
</html>
